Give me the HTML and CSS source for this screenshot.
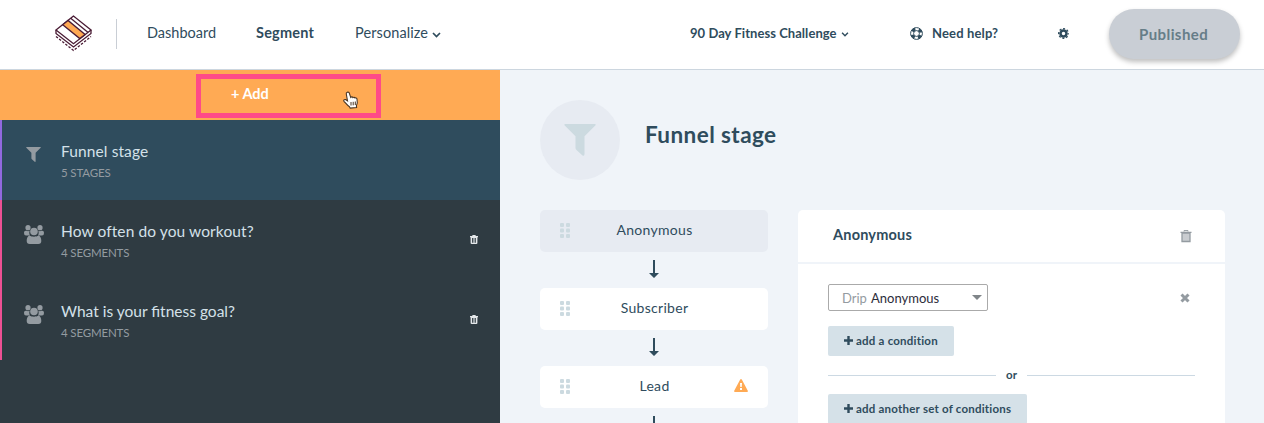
FILE: index.html
```html
<!DOCTYPE html>
<html lang="en">
<head>
<meta charset="utf-8">
<title>Segment</title>
<link rel="stylesheet" href="styles.css">
</head>
<body>
<svg class="defs" aria-hidden="true">
  <symbol id="funnel" viewBox="0 0 32 32"><path d="M1.500 0h29q2 0 .8 1.500L20.500 12.300V30q0 2.500-2 1.500l-6-5.500q-1-1-1-2V12.300L.7 1.500Q-.4 0 1.500 0z"/></symbol>
  <symbol id="people" viewBox="0 0 20 19"><circle cx="4" cy="2.700" r="2.600"/><circle cx="16" cy="2.700" r="2.600"/><path d="M0 8c0-2 1-2.600 2.500-2.300 1 .6 2 .6 3.200 0C5 7.500 5.300 9 6 10.500H2Q0 10.500 0 8zM20 8c0-2-1-2.600-2.500-2.300-1 .6-2 .6-3.200 0 .7 1.800.4 3.300-.3 4.800h4q2 0 2-2.500z"/><circle cx="10" cy="6.500" r="3.800"/><path d="M5.500 10.500c2.500 1.600 6.500 1.600 9 0 2 .8 2.800 2.800 2.800 5.500 0 2-1 3-3 3H5.700c-2 0-3-1-3-3 0-2.700.8-4.700 2.800-5.500z"/></symbol>
  <symbol id="bin" viewBox="0 0 8 9"><path fill-rule="evenodd" d="M2.200 1V.6Q2.200 0 3 0h2q.8 0 .8.600V1H8v1.200h-.6V8q0 1-1 1H1.600q-1 0-1-1V2.200H0V1zM2 3v4.800h.9V3zm1.600 0v4.800h.8V3zm1.600 0v4.800h.8V3z"/></symbol>
  <symbol id="chevron" viewBox="0 0 9 6"><path d="M1 1l3.500 3.500L8 1" fill="none" stroke="currentColor" stroke-width="1.700"/></symbol>
  <symbol id="grip" viewBox="0 0 10 15"><rect width="4" height="4" rx="1"/><rect x="6" width="4" height="4" rx="1"/><rect y="5.500" width="4" height="4" rx="1"/><rect x="6" y="5.500" width="4" height="4" rx="1"/><rect y="11" width="4" height="4" rx="1"/><rect x="6" y="11" width="4" height="4" rx="1"/></symbol>
  <symbol id="arrow" viewBox="0 0 10 18"><path d="M4 0h2v13h4l-5 5-5-5h4z"/></symbol>
  <symbol id="plus" viewBox="0 0 9 9"><path d="M3.300 0h2.400v3.300H9v2.400H5.700V9H3.300V5.700H0V3.300h3.300z"/></symbol>
</svg>

<header class="topbar">
  <svg class="logo" viewBox="0 0 37 37" fill="none" stroke="#4a1c35" stroke-width="1.300">
    <path d="M1 21.500l17.500 14L36 21.500" stroke-dasharray="2.500 1.500"/>
    <path d="M1 15v3.500l17.500 13.500L36 18.500V15" fill="#fff"/>
    <path d="M18.500 1L1 15l17.500 13.700L36 15z" fill="#fff"/>
    <path d="M13 5.400L7.700 9.700 24.800 23.600l5.300-4.100z" fill="#ffaa54"/>
    <path d="M15.700 3.200L32.800 17.300"/>
  </svg>
  <nav class="nav">
    <a class="nav-dashboard">Dashboard</a>
    <a class="nav-segment">Segment</a>
    <a class="nav-personalize">Personalize <svg class="chevron"><use href="#chevron"/></svg></a>
  </nav>
  <div class="account">
    <a class="project">90 Day Fitness Challenge <svg class="chevron small"><use href="#chevron"/></svg></a>
    <a class="help"><svg class="lifebuoy" viewBox="0 0 13 13" fill="none" stroke="currentColor"><circle cx="6.500" cy="6.500" r="5.900" stroke-width="1"/><circle cx="6.500" cy="6.500" r="2.900" stroke-width="1"/><circle cx="6.500" cy="6.500" r="4.500" stroke-width="3" stroke-dasharray="3.530 3.539" stroke-dashoffset="-1.770"/></svg><span>Need help?</span></a>
    <svg class="gear" viewBox="0 0 11 11"><circle cx="5.500" cy="5.500" r="3" fill="none" stroke="currentColor" stroke-width="2.500"/><circle cx="5.500" cy="5.500" r="4.800" fill="none" stroke="currentColor" stroke-width="1.400" stroke-dasharray="2 1.770" stroke-dashoffset="1"/></svg>
    <button class="publish">Published</button>
  </div>
</header>

<main class="workspace">
  <aside class="sidebar">
    <div class="add-bar">
      <div class="add-highlight"><span>+ Add</span>
        <svg class="hand" viewBox="0 0 16 18"><path d="M4.200 1.300c1.100-.5 1.900.1 2.200 1l1.300 4.100c.6-.8 1.800-.7 2.200.2.600-.6 1.700-.4 2.100.4.700-.4 1.800-.1 2 1 .5 2.500.6 4.800-.6 6.800l.2 1.700-6.400.6-.7-1.300C4.500 14.500 2.700 12.200 1 10.300c-.8-1 .3-2.200 1.500-1.700l2 1.300L3.300 3c-.2-.8.100-1.400.9-1.700z" fill="#fff" stroke="#493524" stroke-width="1.100"/><path d="M8 11v3.500M10.200 10.800v3.500M12.300 10.500V14" stroke="#493524" stroke-width="1"/></svg>
      </div>
    </div>
    <div class="item active">
      <svg class="item-funnel"><use href="#funnel"/></svg>
      <div class="item-text"><div class="item-title">Funnel stage</div><div class="item-count">5 STAGES</div></div>
    </div>
    <div class="item">
      <svg class="item-people"><use href="#people"/></svg>
      <div class="item-text"><div class="item-title">How often do you workout?</div><div class="item-count">4 SEGMENTS</div></div>
      <svg class="item-bin"><use href="#bin"/></svg>
    </div>
    <div class="item">
      <svg class="item-people"><use href="#people"/></svg>
      <div class="item-text"><div class="item-title tight">What is your fitness goal?</div><div class="item-count">4 SEGMENTS</div></div>
      <svg class="item-bin"><use href="#bin"/></svg>
    </div>
  </aside>

  <section class="content">
    <div class="heading">
      <div class="heading-icon"><svg><use href="#funnel"/></svg></div>
      <h1>Funnel stage</h1>
    </div>
    <div class="columns">
      <div class="stages">
        <div class="stage selected"><svg class="grip"><use href="#grip"/></svg><span>Anonymous</span></div>
        <svg class="arrow"><use href="#arrow"/></svg>
        <div class="stage"><svg class="grip"><use href="#grip"/></svg><span>Subscriber</span></div>
        <svg class="arrow"><use href="#arrow"/></svg>
        <div class="stage"><svg class="grip"><use href="#grip"/></svg><span>Lead</span>
          <svg class="warning" viewBox="0 0 14 13"><path fill="#ffaa54" d="M6.200.5q.8-1 1.600 0l6 11.300q.4 1.200-.8 1.200H1q-1.200 0-.8-1.200z"/><path d="M6 4h2l-.3 4H6.300zM6 9h2v2H6z" fill="#fff"/></svg>
        </div>
        <svg class="arrow"><use href="#arrow"/></svg>
      </div>
      <div class="panel">
        <div class="panel-head"><h2>Anonymous</h2>
          <svg class="panel-bin" viewBox="0 0 12 12"><path d="M4 1.500V.6h4v.9" fill="none" stroke="#949ba1"/><path d="M.5 1.700h11v1.200H.5z" fill="#949ba1"/><path d="M2 3h8v8.500H2z" fill="#c9ccd0" stroke="#949ba1" stroke-width="1.300"/></svg>
        </div>
        <div class="panel-body">
          <div class="condition">
            <div class="select"><span class="source">Drip</span><span class="value">Anonymous</span><i class="caret"></i></div>
            <svg class="remove" viewBox="0 0 10 10"><path d="M1.500 1.500l7 7M8.500 1.500l-7 7" stroke="#949ba1" stroke-width="3"/></svg>
          </div>
          <button class="add-button one"><svg><use href="#plus"/></svg><span>add a condition</span></button>
          <div class="divider"><span>or</span></div>
          <button class="add-button two"><svg><use href="#plus"/></svg><span>add another set of conditions</span></button>
        </div>
      </div>
    </div>
  </section>
</main>
</body>
</html>
```

FILE: styles.css
```css
* { box-sizing: border-box; }
body { margin: 0; height: 423px; overflow: hidden; background: #f0f4f9; color: #2f4c5d; font-family: Lato, "Open Sans", sans-serif; font-size: 14px; line-height: 20px; white-space: nowrap; }
svg { display: block; flex: none; fill: currentColor; overflow: visible; }
button { border: 0; font-family: inherit; color: inherit; padding: 0; text-align: left; }
h1, h2 { margin: 0; }
.defs { display: none; }

.topbar { display: flex; align-items: flex-start; height: 70px; background: #fff; border-bottom: 1px solid #ccd6df; padding-left: 55px; }
.logo { width: 37px; height: 37px; margin-top: 15px; fill: none; }
.nav { display: flex; height: 30px; margin: 19px 0 0 24px; padding: 4px 0 0 30px; border-left: 1px solid #c9ced5; font-size: 14.500px; }
.nav-dashboard { width: 109px; }
.nav-segment { width: 99px; font-weight: 700; letter-spacing: .2px; }
.nav-personalize { display: flex; align-items: center; gap: 4px; height: 20px; letter-spacing: .1px; }
.chevron { width: 9px; height: 6px; margin-top: 3px; }
.chevron.small { width: 8px; height: 5px; margin-top: 2px; }
.account { display: flex; margin-left: auto; padding: 9px 24px 0 0; font-weight: 700; font-size: 13px; }
.account a { height: 20px; margin-top: 14px; display: flex; align-items: center; }
.project { width: 220px; gap: 4px; letter-spacing: .05px; }
.help { width: 148px; gap: 9px; letter-spacing: .15px; }
.lifebuoy { width: 13px; height: 13px; margin-top: 1px; fill: none; }
.gear { width: 11px; height: 11px; margin: 19px 40px 0 0; }
.publish { width: 131px; height: 50px; border-radius: 25px; padding: 0 0 1px 30px; background: #c9ced5; color: #667d88; font-size: 15px; font-weight: 700; letter-spacing: .42px; box-shadow: 0 3px 5px rgba(0,0,0,.25); }

.workspace { display: flex; height: 353px; overflow: hidden; }
.sidebar { width: 500px; flex: none; background: #2f3b42; }
.add-bar { height: 50px; background: #ffaa54; padding: 4px 0 0 196px; }
.add-highlight { display: flex; width: 185px; height: 44px; border: 5px solid #ff4b88; padding: 5px 17px 0 30px; justify-content: space-between; color: #fff; font-weight: 700; font-size: 14.500px; }
.hand { width: 16px; height: 18px; margin-top: 7px; }
.item { display: flex; height: 80px; border-left: 2px solid #ee5094; padding: 21px 22px 0 22px; color: #949ba1; }
.item.active { background: #2f4c5d; border-color: #9269df; }
.item-funnel { width: 15px; height: 15px; margin: 6px 20px 0 2px; }
.item-people { width: 20px; height: 19px; margin: 4px 17px 0 0; }
.item-title { color: #d4e1e9; font-size: 15.500px; letter-spacing: .1px; }
.item-title.tight { letter-spacing: 0; }
.item-count { font-size: 11.500px; line-height: 24px; letter-spacing: -.15px; }
.item-bin { width: 8px; height: 9px; margin: 14px 0 0 auto; color: #e3e7e9; }

.content { flex: 1; padding: 30px 0 0 40px; }
.heading { display: flex; gap: 25px; height: 110px; }
.heading-icon { width: 80px; height: 80px; border-radius: 50%; background: #e7ebf2; display: grid; place-items: center; color: #ccdae0; }
.heading-icon svg { width: 32px; height: 32px; }
h1 { font-size: 22.500px; line-height: 30px; margin-top: 20px; letter-spacing: .42px; }
.columns { display: flex; gap: 30px; align-items: flex-start; }
.stages { width: 228px; height: 213px; overflow: hidden; display: flex; flex-direction: column; align-items: center; }
.stage { display: grid; grid-template-columns: 50px 128px 50px; align-items: center; width: 228px; height: 42px; flex: none; background: #fff; border-radius: 5px; text-align: center; padding-bottom: 1px; }
.stage span { padding: 0 0 1px 1px; letter-spacing: .3px; }
.selected { background: #e7ebf2; }
.grip { width: 10px; height: 15px; margin-left: 20px; color: #ccdae0; }
.warning { width: 14px; height: 13px; margin: 0 0 2px 16px; }
.arrow { width: 10px; height: 18px; margin: 8px 0 10px; }
.panel { width: 427px; height: 213px; overflow: hidden; background: #fff; border-radius: 5px 5px 0 0; }
.panel-head { display: flex; justify-content: space-between; height: 54px; border-bottom: 2px solid #f0f4f9; padding: 15px 33px 0 35px; }
h2 { font-size: 14.500px; line-height: 20px; letter-spacing: .2px; }
.panel-bin { width: 12px; height: 12px; margin-top: 5px; }
.panel-body { padding: 20px 30px; }
.condition { display: flex; justify-content: space-between; padding-right: 5px; margin-bottom: 15px; }
.select { display: flex; align-items: center; width: 160px; height: 27px; border: 1px solid #aaa; border-radius: 2px; padding: 0 5px 0 13px; color: #2d2d3a; font-size: 13px; }
.source { width: 29px; color: #949ba1; }
.caret { margin-left: auto; border: 5px solid transparent; border-top-color: #808589; border-bottom: 0; }
.remove { width: 10px; height: 10px; margin-top: 9px; }
.add-button { display: flex; align-items: center; gap: 3px; height: 30px; padding: 0 0 1px 16px; background: #d5e1e8; border-radius: 2px; font-size: 11.500px; font-weight: 700; letter-spacing: .22px; }
.add-button svg { width: 9px; height: 9px; }
.one { width: 126px; }
.two { width: 199px; }
.divider { display: flex; align-items: center; gap: 10px; height: 38px; font-size: 11.500px; font-weight: 700; }
.divider::before, .divider::after { content: ""; height: 1px; flex: 1; background: #ccd9e3; }
```
